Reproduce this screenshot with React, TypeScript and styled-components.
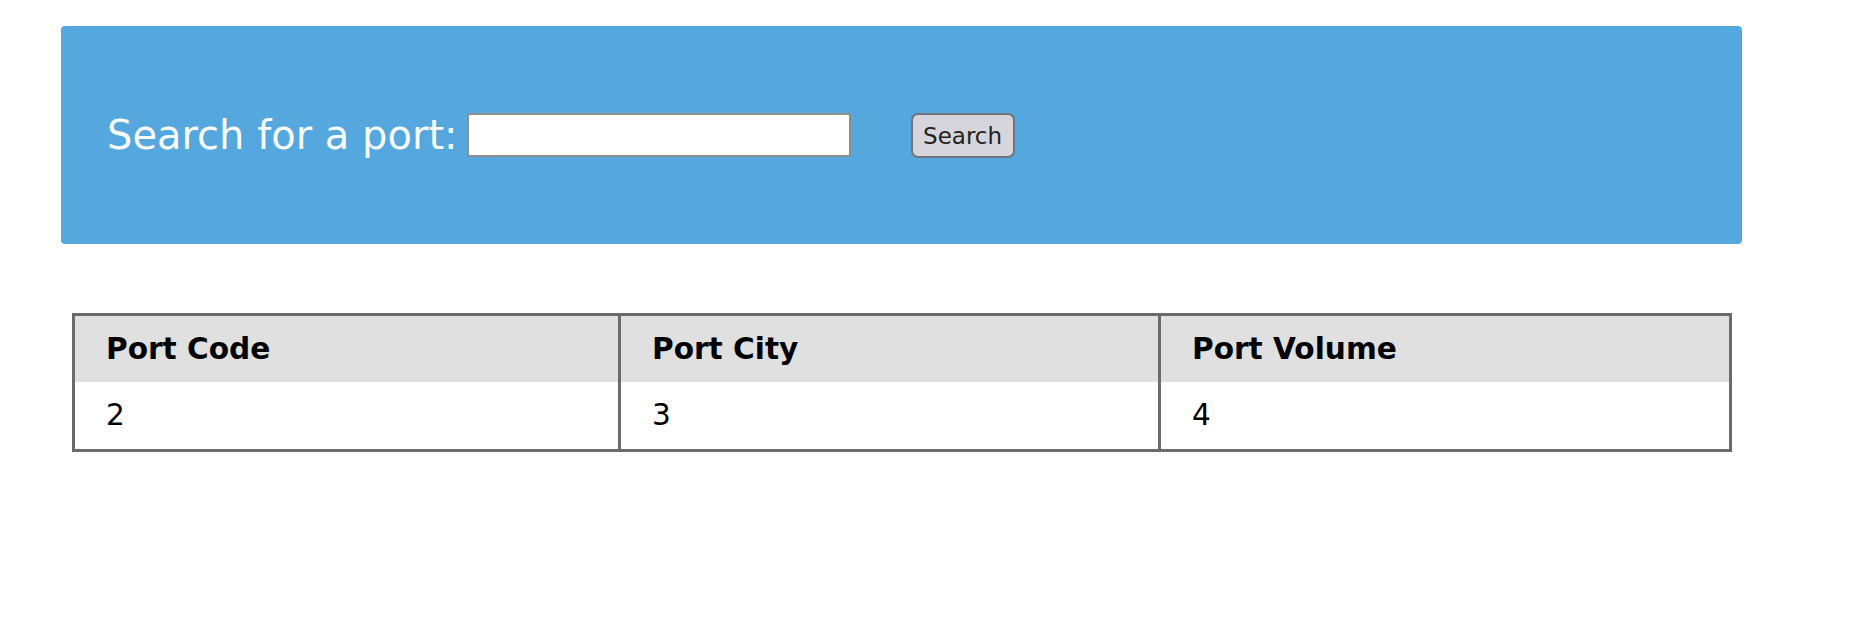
import React from "react";
import styled, { createGlobalStyle } from "styled-components";

const GlobalStyle = createGlobalStyle`
  html, body {
    margin: 0;
    padding: 0;
    background: #ffffff;
    font-family: "DejaVu Sans", "Liberation Sans", sans-serif;
  }
`;

const Page = styled.div`
  padding: 26px 0 0 61px;
  width: 1681px;
`;

const SearchPanel = styled.form`
  box-sizing: border-box;
  height: 218px;
  background: #55a8dd;
  border-radius: 4px;
  display: flex;
  align-items: center;
  padding-left: 46px;
`;

const Label = styled.label`
  font-family: "DejaVu Sans", sans-serif;
  font-size: 40px;
  color: #f7fbfe;
  margin-right: 9px;
  line-height: 1;
`;

const SearchInput = styled.input`
  box-sizing: border-box;
  width: 384px;
  height: 44px;
  border: 2px solid #8e8e8e;
  border-radius: 3px;
  background: #ffffff;
  margin: 0 60px 0 0;
  padding: 0;
  outline: none;
`;

const SearchButton = styled.button`
  box-sizing: border-box;
  width: 104px;
  height: 45px;
  background: #d5d5db;
  border: 2px solid #70737c;
  border-radius: 7px;
  font-family: "DejaVu Sans", sans-serif;
  font-size: 23px;
  color: #222;
  padding: 2px 0 0;
  cursor: pointer;
`;

const Table = styled.table`
  margin: 69px 11px 0 11px;
  width: 1657px;
  table-layout: fixed;
  border-collapse: collapse;
  border: 3px solid #6b6b6b;
  font-family: "DejaVu Sans", sans-serif;
  font-size: 29.6px;
`;

const HeadRow = styled.tr`
  background: #e0e0e0;
`;

const HeadCell = styled.th`
  text-align: left;
  font-weight: bold;
  color: #000;
  padding: 16px 31px 16px;
  border-left: 3px solid #6b6b6b;
  border-right: 3px solid #6b6b6b;
  line-height: 1.164;
`;

const Cell = styled.td`
  color: #000;
  padding: 16px 31px 16px;
  border-left: 3px solid #6b6b6b;
  border-right: 3px solid #6b6b6b;
  line-height: 1.164;
`;

const columns = [
  { head: "Port Code", value: "2", width: 546 },
  { head: "Port City", value: "3", width: 540 },
  { head: "Port Volume", value: "4", width: 571 },
];

export default function App() {
  return (
    <>
      <GlobalStyle />
      <Page>
        <SearchPanel onSubmit={(e) => e.preventDefault()}>
          <Label htmlFor="port">Search for a port:</Label>
          <SearchInput id="port" type="text" />
          <SearchButton type="submit">Search</SearchButton>
        </SearchPanel>
        <Table>
          <colgroup>
            {columns.map((c) => (
              <col key={c.head} style={{ width: c.width }} />
            ))}
          </colgroup>
          <thead>
            <HeadRow>
              {columns.map((c) => (
                <HeadCell key={c.head}>{c.head}</HeadCell>
              ))}
            </HeadRow>
          </thead>
          <tbody>
            <tr>
              {columns.map((c) => (
                <Cell key={c.head}>{c.value}</Cell>
              ))}
            </tr>
          </tbody>
        </Table>
      </Page>
    </>
  );
}
